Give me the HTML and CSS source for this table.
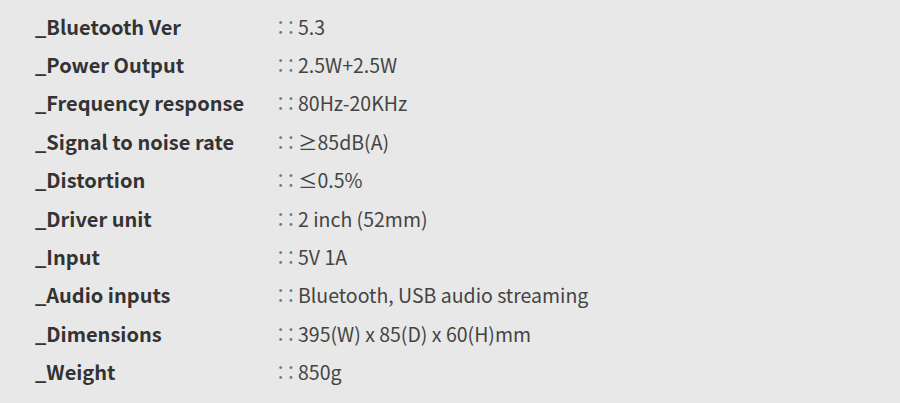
FILE: index.html
```html
<!DOCTYPE html>
<html lang="ja">
<head>
<meta charset="utf-8">
<link rel="stylesheet" href="styles.css">
</head>
<body>
<div class="specs">
  <div class="label">_Bluetooth Ver</div><div class="value"><span class="sep">∷</span>5.3</div>
  <div class="label">_Power Output</div><div class="value"><span class="sep">∷</span>2.5W+2.5W</div>
  <div class="label">_Frequency response</div><div class="value"><span class="sep">∷</span>80Hz-20KHz</div>
  <div class="label">_Signal to noise rate</div><div class="value"><span class="sep">∷</span>≥85dB(A)</div>
  <div class="label">_Distortion</div><div class="value"><span class="sep">∷</span>≤0.5%</div>
  <div class="label">_Driver unit</div><div class="value"><span class="sep">∷</span>2 inch (52mm)</div>
  <div class="label">_Input</div><div class="value"><span class="sep">∷</span>5V 1A</div>
  <div class="label">_Audio inputs</div><div class="value"><span class="sep">∷</span>Bluetooth, USB audio streaming</div>
  <div class="label">_Dimensions</div><div class="value"><span class="sep">∷</span>395(W) x 85(D) x 60(H)mm</div>
  <div class="label">_Weight</div><div class="value"><span class="sep">∷</span>850g</div>
</div>
</body>
</html>
```
FILE: styles.css
```css
html, body {
  margin: 0;
  padding: 0;
  background: #e8e8e8;
}
body {
  width: 900px;
  height: 403px;
  overflow: hidden;
  font-family: "Noto Sans CJK JP", "Noto Sans", sans-serif;
}
.specs {
  display: grid;
  grid-template-columns: 243px 1fr;
  grid-auto-rows: 38.4px;
  padding: 7px 0 0 35px;
  align-items: center;
}
.label {
  font-size: 20px;
  font-weight: 700;
  color: #333;
}
.value {
  font-size: 19.5px;
  font-weight: 400;
  color: #444;
}
.sep {
  display: inline-block;
  width: 22px;
  margin-left: -2px;
  color: #777;
}
```
